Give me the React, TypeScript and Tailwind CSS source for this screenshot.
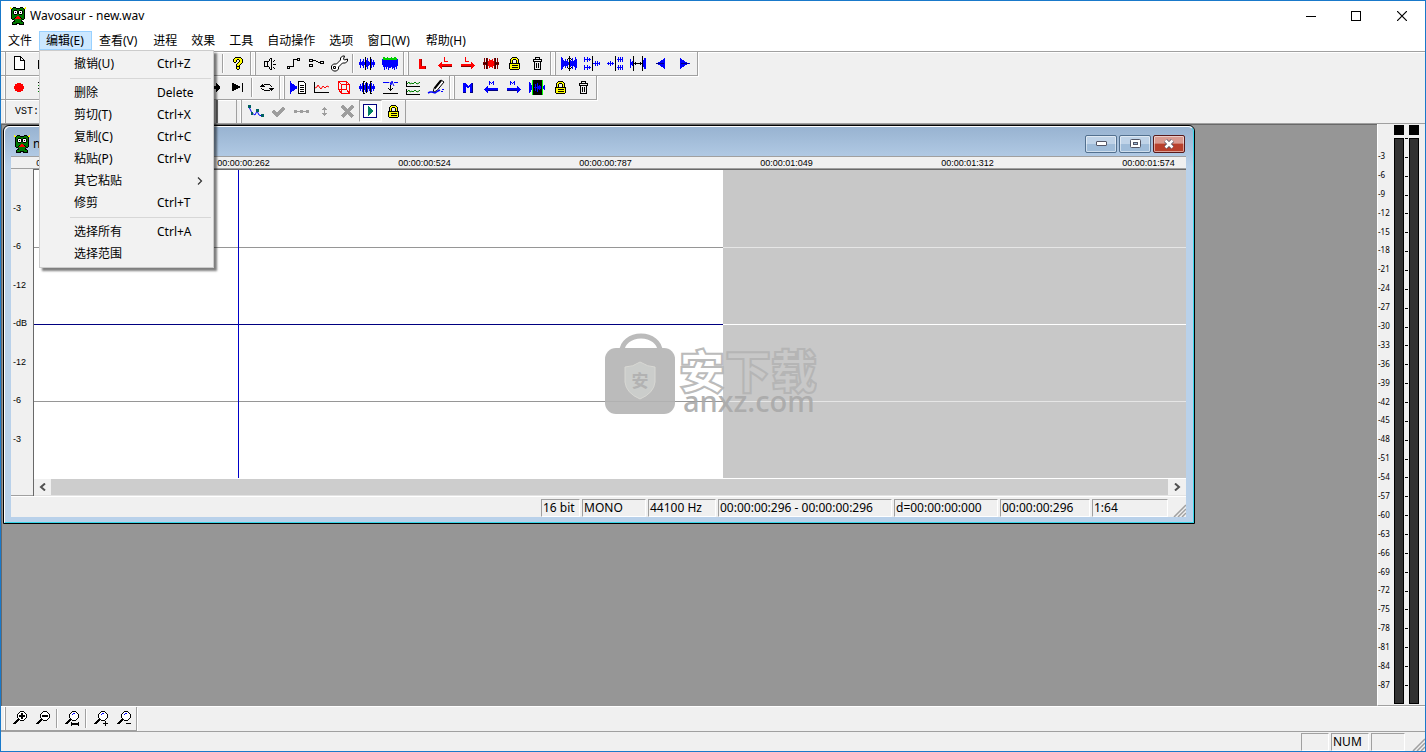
import React, { type ReactNode } from "react";

/* ---------- drawing helpers ---------- */

/** Vertical one-pixel bars centred on cy; each entry is the half height of a column. */
function wave(x: number, cy: number, halves: number[]): string {
  return halves
    .map((h, i) => (h > 0 ? `M${x + i} ${cy - h + 1}h1v${h * 2 - 1}h-1z` : ""))
    .join("");
}

function Glyph({ children }: { children: ReactNode }) {
  return (
    <svg viewBox="0 0 17 17" className="size-[17px] shrink-0 overflow-visible" shapeRendering="crispEdges" fill="none" aria-hidden="true">
      {children}
    </svg>
  );
}

const BLUE = "#0000ff";
const RED = "#ff0000";

const palette: Record<string, string> = {
  k: "#000000",
  g: "#007800",
  y: "#ffff00",
  w: "#ffffff",
  r: "#ff0000",
};

function Pixels({ rows }: { rows: string[] }) {
  return (
    <svg
      viewBox={`0 0 ${rows[0].length} ${rows.length}`}
      width={rows[0].length}
      height={rows.length}
      shapeRendering="crispEdges"
      aria-hidden="true"
    >
      {rows.flatMap((row, y) =>
        row.split("").map((c, x) =>
          palette[c] ? <rect key={`${x}-${y}`} x={x} y={y} width="1" height="1" fill={palette[c]} /> : null,
        ),
      )}
    </svg>
  );
}

const dino = [
  "y..kkk....kkk..y",
  "yykgggkkkkgggkyy",
  ".kggggggggggggk.",
  ".kggkkkggkkkggk.",
  ".kgkwwwkkwwwkgk.",
  ".kgkwkwkkwkwkgk.",
  ".kgkwwwkkwwwkgk.",
  ".kggkkkggkkkggk.",
  ".kggggggggggggk.",
  ".kgggggrrgggggk.",
  ".kgggkrrrrkgggk.",
  ".kggkrrrrrrkggk.",
  "..kkggggggggkk..",
  "....kggggggk....",
  "...kkggggggkk...",
  "..kggggggggggk..",
  "..kgggkkkkgggk..",
  "..kkkkk..kkkkk..",
];

const questionMark = [
  "..kkkkkk..",
  ".kyyyyyyk.",
  "kyyykkyyyk",
  "kyyk..kyyk",
  "kyyk..kyyk",
  ".kk..kyyyk",
  "....kyyyk.",
  "...kyyyk..",
  "...kyyk...",
  "...kkkk...",
  "...kyyk...",
  "...kyyk...",
  "....kk....",
];

const lock = [
  "...kkkkk...",
  "..kyyyyyk..",
  ".kyykkkyyk.",
  ".kyk...kyk.",
  ".kyk...kyk.",
  ".kyk...kyk.",
  "kkkkkkkkkkk",
  "kyyyyyyyyyk",
  "kyykkkkkkyk",
  "kyyyyyyyyyk",
  "kyykkkkkkyk",
  "kyyyyyyyyyk",
  ".kkkkkkkkk.",
];

/* ---------- icons ---------- */

const icons = {
  newFile: (
    <Glyph>
      <path d="M3.500 1.500h6l4 4v9h-10zM9.500 1.500v4h4" stroke="#000" fill="#fff" />
    </Glyph>
  ),
  open: (
    <Glyph>
      <path d="M4.500 13.500v-8h3l1 1h6v7z" stroke="#000" fill="#ffff80" />
    </Glyph>
  ),
  question: <Pixels rows={questionMark} />,
  speaker: (
    <Glyph>
      <path d="M3.500 6.500h3v5h-3zM7 6.500h1M7 11.500h1M8 4.500h1M8 13.500h1M8.500 4v2M8.500 12v2M10.500 3v12M9 3.500h1M9 14.500h1" stroke="#000" />
      <path d="M12 6.500h1M13 5.500h1M12 9.500h3M12 12.500h1M13 13.500h1" stroke="#000" />
    </Glyph>
  ),
  nodesStep: (
    <Glyph>
      <path d="M3.500 11.500h2v2h-2zM13.500 3.500h2v2h-2zM6 11.500h3.500v-7h4" stroke="#000" />
    </Glyph>
  ),
  nodesSplit: (
    <Glyph>
      <path d="M2.500 4.500h3v2h-3zM2.500 9.500h3v2h-3zM13.500 6.500h3v2h-3zM6 5.500h3M9 6.500h2M11 7.500h2" stroke="#000" />
    </Glyph>
  ),
  wrench: (
    <Glyph>
      <path
        d="M1.500 11l2-2h3l4-4v-2l2-2h2l-1 3 1 1 3-1v2l-2 2h-3l-4 4v2l-2 2h-3l-2-2zM3.500 11.500h2v2h-2z"
        stroke="#000"
        fill="#fff"
        shapeRendering="auto"
      />
    </Glyph>
  ),
  waveSelect: (
    <Glyph>
      <path d={wave(0, 8, [2, 5, 2, 3, 5, 2, 0, 4, 6, 3, 2, 0, 5, 2, 4, 2])} fill={BLUE} />
      <path d="M6.500 2v13M11.500 2v13" stroke="#000" />
    </Glyph>
  ),
  waveFull: (
    <Glyph>
      <path d="M0 4h16v7h-1v3h-1v-2h-1v3h-1v-2h-1v1h-1v-2h-1v1h-2v2h-1v-3h-1v2h-1v-2h-1v3h-1v-3h-1v-2h-1z" fill={BLUE} />
      <path d="M1 2h2v1h2v-1h1v1h3v-1h1v1h2v-1h2v1h1v2h-14z" fill="#00d000" />
    </Glyph>
  ),
  redL: (
    <Glyph>
      <path d="M5 4h3v7h4v3h-7z" fill={RED} />
      <path d="M7.500 4v7M11.500 11v3" stroke="#a00000" />
    </Glyph>
  ),
  redPrev: (
    <Glyph>
      <path d="M7.500 2v4.500h3" stroke={RED} />
      <path d="M1 10.500l4-3.500v2h10v2h-10v3z" fill={RED} />
      <path d="M5 11.500h10" stroke="#800000" />
    </Glyph>
  ),
  redNext: (
    <Glyph>
      <path d="M5.500 2v4.500h3" stroke={RED} />
      <path d="M15 10.500l-4-3.500v2h-10v2h10v3z" fill={RED} />
      <path d="M1 11.500h10" stroke="#800000" />
    </Glyph>
  ),
  redWave: (
    <Glyph>
      <path d={wave(0, 8, [2, 6, 2, 4, 6, 2, 2, 2, 2, 2, 2, 6, 4, 2, 6, 2])} fill="#800000" />
      <path d={wave(5, 8, [3, 5, 4, 4, 5, 3])} fill={RED} />
      <path d="M3.500 3v11M12.500 3v11M0 8.500h4M12 8.500h4" stroke="#400000" />
    </Glyph>
  ),
  lock: <Pixels rows={lock} />,
  trash: (
    <Glyph>
      <path d="M4 4.500h9M6.500 4v-1.500h4v2M5.500 6v8.500h6v-8.500M4 6.500h9M4.500 4v3M12.500 4v3" stroke="#000" />
      <path d="M7.500 8v5M9.500 8v5" stroke="#000" />
    </Glyph>
  ),
  waveVertical: (
    <Glyph>
      <path d={wave(0, 8, [7, 6, 4, 3, 5, 3, 4, 2, 2, 4, 3, 6, 3, 4, 7, 5])} fill={BLUE} />
      <path d="M8.500 1v15M7 3.500h3M6 4.500h1M10 4.500h1M7 13.500h3M6 12.500h1M10 12.500h1" stroke="#000" />
    </Glyph>
  ),
  splitLeft: (
    <Glyph>
      <path d={wave(0, 4, [3, 1, 1, 3, 1, 2, 1]) + wave(0, 12, [3, 1, 1, 3, 1, 2, 1]) + wave(9, 8, [1, 1, 3, 1, 3, 1, 2])} fill={BLUE} />
      <path d="M8.500 1v15" stroke="#000" />
    </Glyph>
  ),
  splitRight: (
    <Glyph>
      <path d={wave(10, 4, [1, 3, 1, 3, 1, 3]) + wave(10, 12, [1, 3, 1, 3, 1, 3]) + wave(0, 8, [1, 2, 1, 3, 1, 2, 1])} fill={BLUE} />
      <path d="M8.500 1v15" stroke="#000" />
    </Glyph>
  ),
  waveGap: (
    <Glyph>
      <path d={wave(0, 8, [5, 2, 3]) + wave(13, 8, [4, 6, 6])} fill={BLUE} />
      <path d="M3.500 1v15M12.500 1v15M4 8.500h8M5.500 7v3M10.500 7v3" stroke="#000" />
    </Glyph>
  ),
  fadeIn: (
    <Glyph>
      <path d={wave(3, 8, [1, 1, 2, 2, 3, 4, 4, 5, 6])} fill={BLUE} />
      <path d="M3 8.500h8" stroke="#000080" />
    </Glyph>
  ),
  fadeOut: (
    <Glyph>
      <path d={wave(4, 8, [6, 5, 4, 4, 3, 2, 2, 1, 1, 1])} fill={BLUE} />
      <path d="M5 8.500h8" stroke="#000080" />
    </Glyph>
  ),
  record: (
    <Glyph>
      <path d="M6 4h4v1h2v2h1v3h-1v2h-2v1h-4v-1h-2v-2h-1v-3h1v-2h2z" fill={RED} />
    </Glyph>
  ),
  playlist: (
    <Glyph>
      <path d="M4 3.500h9M4 9.500h9" stroke="#000" />
      <path d="M4 6.500h9M4 12.500h9" stroke="#008000" />
    </Glyph>
  ),
  step: (
    <Glyph>
      <path d="M4 7h6v-3h1v1h1v1h1v1h1v3h-1v1h-1v1h-1v1h-1v-3h-6z" fill="#000" />
    </Glyph>
  ),
  toEnd: (
    <Glyph>
      <path d="M3 4h2v1h2v1h2v1h2v2h-2v1h-2v1h-2v1h-2zM13 4h1v9h-1z" fill="#000" />
    </Glyph>
  ),
  loop: (
    <Glyph>
      <path d="M6 5.500h6M12 6.500h1M13 7.500h1M6 11.500h6M4 10.500h2M3 9.500h1M2 7.500h5M3 6.500h3M4 5.500h1M11 9.500h5M12 10.500h3M13 11.500h1" stroke="#000" />
    </Glyph>
  ),
  waveToText: (
    <Glyph>
      <path d={wave(1, 8, [5, 4, 4, 3, 2, 2])} fill={BLUE} />
      <path d="M0.500 2v13" stroke={BLUE} />
      <path d="M8.500 2.500h5l2 2v10h-7z" stroke="#000" fill="#fff" />
      <path d="M10 6.500h4M10 8.500h4M10 10.500h4M10 12.500h4" stroke="#000" />
    </Glyph>
  ),
  lineChart: (
    <Glyph>
      <path d="M1.500 3v11M1 13.500h15" stroke="#000" />
      <path d="M2 9l2-1 1-2 2 3 1 1 2-3 2 2 2-2 2 1" stroke={RED} shapeRendering="auto" />
    </Glyph>
  ),
  cube: (
    <Glyph>
      <path d="M5.500 5.500h8v9h-8zM2.500 2.500h8v8h-8zM2.500 2.500l3 3M10.500 2.500l3 3M2.500 10.500l3 4M10.500 10.500l3 4" stroke={RED} />
    </Glyph>
  ),
  waveBrackets: (
    <Glyph>
      <path d={wave(0, 8, [2, 4, 2, 5, 0, 3, 5, 0, 5, 2, 4, 0, 5, 2, 4, 2])} fill={BLUE} />
      <path d="M4.500 2v13M4 2.500h2M7.500 3v11M11.500 2v13M11 2.500h2M4 14.500h2M11 14.500h2" stroke="#000" />
    </Glyph>
  ),
  normalize: (
    <Glyph>
      <path d="M1 3.500h6M12 3.500h4" stroke={BLUE} />
      <path d="M8 3l1 3 1-4 1 3 1 2" stroke={BLUE} shapeRendering="auto" />
      <path d="M8.500 6v6M6 9.500h1M10 9.500h1M7 10.500h3M1 14.500h15" stroke="#000" />
    </Glyph>
  ),
  multiTrack: (
    <Glyph>
      <path d="M1.500 2v6M1 7.500h14M1.500 10v6M1 15.500h14" stroke="#000" />
      <path d="M2 5l2-2 1 2 2-1 1 1 2-2 2 2 2-1 1-1M2 13l2-2 1 2 2-1 1 1 2-2 2 2 2-1 1-1" stroke="#008000" shapeRendering="auto" />
    </Glyph>
  ),
  pen: (
    <Glyph>
      <path d="M6 9.500l7-8.500 3 2-7 8.500-4 2z" stroke="#000" fill="#fff" shapeRendering="auto" />
      <path d="M6.500 9.500l6.500-8" stroke="#000" strokeWidth="2" shapeRendering="auto" />
      <path d="M0 14l2-1h2l3 1 3-2 2-1" stroke={BLUE} strokeWidth="1.500" shapeRendering="auto" />
      <path d="M14 10h2v1h-2zM13 12h2v1h-2z" fill={BLUE} />
    </Glyph>
  ),
  marker: (
    <Glyph>
      <path d="M3 4h3v1h1v1h1v1h1v-1h1v-1h1v-1h2v9h-3v-5h-1v1h-2v-1h-1v5h-3z" fill={BLUE} />
      <path d="M12.500 4v9M3 13.500h3M10 13.500h3" stroke="#000080" />
    </Glyph>
  ),
  markerPrev: (
    <Glyph>
      <path d="M6.500 6v-4M10.500 6v-4M7 3.500h1M8 4.500h1M9 3.500h1" stroke={BLUE} />
      <path d="M1 10.500l4-3.500v2h10v2h-10v3z" fill={BLUE} />
      <path d="M5 11.500h10" stroke="#000080" />
    </Glyph>
  ),
  markerNext: (
    <Glyph>
      <path d="M4.500 6v-4M8.500 6v-4M5 3.500h1M6 4.500h1M7 3.500h1" stroke={BLUE} />
      <path d="M15 10.500l-4-3.500v2h-10v2h10v3z" fill={BLUE} />
      <path d="M1 11.500h10" stroke="#000080" />
    </Glyph>
  ),
  waveRegion: (
    <Glyph>
      <path d={wave(0, 8, [6, 5, 3]) + wave(14, 8, [2, 3])} fill={BLUE} />
      <path d="M4 1h9v15h-9z" fill="#000" />
      <path d="M3.500 1v15M13.500 1v15" stroke="#00ff00" />
      <path d={wave(5, 8, [1, 4, 1, 5, 2, 3, 2])} fill={BLUE} />
    </Glyph>
  ),
  envelope: (
    <Glyph>
      <path d="M2 4l3 6 3 2 2-4 2 4 3 1" stroke={BLUE} shapeRendering="auto" />
      <path d="M1 2h3v3h-3zM4 9h2v3h-2zM9 6h3v3h-3zM14 11h3v3h-3z" fill="#006060" />
    </Glyph>
  ),
  check: (
    <Glyph>
      <path d="M3 8l4 4 7-7" stroke="#9d9d9d" strokeWidth="3" />
    </Glyph>
  ),
  dots: (
    <Glyph>
      <path d="M1 7h3v3h-3zM7 7h3v3h-3zM13 7h3v3h-3zM4 8h9v1h-9z" fill="#9d9d9d" />
    </Glyph>
  ),
  upDown: (
    <Glyph>
      <path d="M8.500 4v9M6 6.500h5M7 5.500h3M6 10.500h5M7 11.500h3" stroke="#9d9d9d" />
    </Glyph>
  ),
  cross: (
    <Glyph>
      <path d="M3 3l11 11M14 3l-11 11" stroke="#9d9d9d" strokeWidth="3" />
    </Glyph>
  ),
  playBox: (
    <Glyph>
      <path d="M1.500 1.500h13v13h-13z" stroke="#000080" fill="#fff" />
      <path d="M6 3h1v1h1v1h1v1h1v1h1v2h-1v1h-1v1h-1v1h-1v1h-1z" fill="#008060" />
    </Glyph>
  ),
};

function Magnifier({ children, glint }: { children: ReactNode; glint?: boolean }) {
  return (
    <Glyph>
      <path d="M9 2h4v1h1v1h1v4h-1v1h-1v1h-4v-1h-1v-1h-1v-4h1v-1h1z" fill="#fff" />
      <path
        d="M9 1.500h4M8 2.500h1M13 2.500h1M7 3.500h1M14 3.500h1M6.500 4v4M15.500 4v4M7 8.500h1M14 8.500h1M8 9.500h1M13 9.500h1M9 10.500h4"
        stroke="#000"
      />
      <path d="M6 9h2v2h-1v1h-1v1h-1v1h-3v-1h1v-1h1v-1h1v-1h1z" fill="#000" />
      {glint && <path d="M9 4.500h1M10 3.500h2" stroke={BLUE} />}
      {children}
    </Glyph>
  );
}

/* ---------- toolbars ---------- */

type Tool = [label: string, icon: ReactNode] | null;

function ToolButton({ label, children, pressed }: { label: string; children?: ReactNode; pressed?: boolean }) {
  return (
    <button
      type="button"
      aria-label={label}
      className={
        pressed
          ? "flex h-[22px] w-[23px] shrink-0 items-center justify-center border border-t-[#a0a0a0] border-r-white border-b-white border-l-[#a0a0a0] bg-[#f7f7f7]"
          : "flex h-[22px] w-[23px] shrink-0 items-center justify-center"
      }
    >
      {children}
    </button>
  );
}

function Separator() {
  return (
    <div className="flex w-1.5 shrink-0 justify-center py-0.5">
      <div className="w-0.5 border-r border-l border-r-white border-l-[#a0a0a0]" />
    </div>
  );
}

function Group({ children }: { children: ReactNode }) {
  return (
    <div className="flex h-6 shrink-0 border-r border-b border-[#a0a0a0] pr-px pl-[3px] shadow-[1px_1px_0_#fff]">
      <div className="mr-0.5 w-0.5 border-r border-l border-r-[#a0a0a0] border-l-white" />
      {children}
    </div>
  );
}

function Tools({ items }: { items: Tool[] }) {
  return (
    <>
      {items.map((t, i) => (t ? <ToolButton key={i} label={t[0]}>{t[1]}</ToolButton> : <Separator key={i} />))}
    </>
  );
}

const channelTools: Tool[] = [
  ["Speaker", icons.speaker],
  ["Step", icons.nodesStep],
  ["Routing", icons.nodesSplit],
  ["Settings", icons.wrench],
  null,
  ["Selection", icons.waveSelect],
  ["Full view", icons.waveFull],
];
const loopTools: Tool[] = [
  ["Loop", icons.redL],
  ["Previous loop", icons.redPrev],
  ["Next loop", icons.redNext],
  ["Loop region", icons.redWave],
  ["Lock loops", icons.lock],
  ["Delete loops", icons.trash],
];
const zoomTools: Tool[] = [
  ["Vertical zoom", icons.waveVertical],
  ["Split left", icons.splitLeft],
  ["Split right", icons.splitRight],
  ["Gap", icons.waveGap],
  ["Fade in", icons.fadeIn],
  ["Fade out", icons.fadeOut],
];
const analysisTools: Tool[] = [
  ["Export text", icons.waveToText],
  ["Spectrum", icons.lineChart],
  ["3D spectrum", icons.cube],
  ["Slices", icons.waveBrackets],
  ["Normalize", icons.normalize],
  ["Tracks", icons.multiTrack],
  ["Draw", icons.pen],
];
const markerTools: Tool[] = [
  ["Marker", icons.marker],
  ["Previous marker", icons.markerPrev],
  ["Next marker", icons.markerNext],
  ["Marker region", icons.waveRegion],
  ["Lock markers", icons.lock],
  ["Delete markers", icons.trash],
];
const envelopeTools: Tool[] = [
  ["Envelope", icons.envelope],
  ["Apply", icons.check],
  ["Flatten", icons.dots],
  ["Scale", icons.upDown],
  ["Clear", icons.cross],
];

function Toolbars() {
  return (
    <div className="border-t border-[#a0a0a0]">
      <div className="flex shadow-[inset_0_1px_0_#fff]">
        <Group>
          <div className="flex w-[212px]">
            <Tools items={[["New", icons.newFile], ["Open", icons.open]]} />
          </div>
          <Separator />
          <Tools items={[["Help", icons.question]]} />
        </Group>
        <Group><Tools items={channelTools} /></Group>
        <Group><Tools items={loopTools} /></Group>
        <Group><Tools items={zoomTools} /></Group>
      </div>
      <div className="flex">
        <Group>
          <div className="flex w-[195px]">
            <Tools items={[["Record", icons.record], ["Playlist", icons.playlist]]} />
          </div>
          <Tools items={[["Play", icons.step], ["To end", icons.toEnd], null, ["Loop playback", icons.loop]]} />
        </Group>
        <Group><Tools items={analysisTools} /></Group>
        <Group><Tools items={markerTools} /></Group>
      </div>
      <div className="flex border-b border-[#a0a0a0]">
        <div className="flex h-[23px] w-[236px] border-r border-[#a0a0a0] pl-[3px]">
          <div className="mr-[9px] w-0.5 border-r border-l border-r-[#a0a0a0] border-l-white" />
          <div className="flex flex-1 items-center font-['Liberation_Mono',monospace] text-[10px]">VST:</div>
          <button type="button" aria-label="VST rack" className="mr-[18px] w-14 border-r-2 border-[#696969] bg-[#c0c0c0]" />
        </div>
        <div className="flex h-[23px] border-r border-[#a0a0a0] pl-[3px]">
          <div className="mr-0.5 w-0.5 border-r border-l border-r-[#a0a0a0] border-l-white" />
          <Tools items={envelopeTools} />
          <ToolButton label="Auto play" pressed>{icons.playBox}</ToolButton>
          <ToolButton label="Lock envelope">{icons.lock}</ToolButton>
        </div>
      </div>
    </div>
  );
}

/* ---------- menu ---------- */

const menus = ["文件", "编辑(E)", "查看(V)", "进程", "效果", "工具", "自动操作", "选项", "窗口(W)", "帮助(H)"];

const editMenu: ([string, string] | null)[] = [
  ["撤销(U)", "Ctrl+Z"],
  null,
  ["删除", "Delete"],
  ["剪切(T)", "Ctrl+X"],
  ["复制(C)", "Ctrl+C"],
  ["粘贴(P)", "Ctrl+V"],
  ["其它粘贴", ">"],
  ["修剪", "Ctrl+T"],
  null,
  ["选择所有", "Ctrl+A"],
  ["选择范围", ""],
];

function EditMenu() {
  return (
    <div
      role="menu"
      className="absolute top-full left-0 z-20 w-[175px] border border-[#cccccc] bg-[#f2f2f2] py-0.5 shadow-[3px_3px_2px_rgba(0,0,0,0.5)]"
    >
      {editMenu.map((item, i) =>
        item ? (
          <button key={i} type="button" role="menuitem" className="flex h-[22px] w-full items-center pl-[34px] text-left">
            <span className="w-[83px]">{item[0]}</span>
            {item[1] === ">" ? (
              <svg viewBox="0 0 6 8" className="ml-10 h-2 w-1.5" fill="none" stroke="#333" aria-hidden="true">
                <path d="M1 0.500l3.500 3.500-3.500 3.500" strokeWidth="1.200" />
              </svg>
            ) : (
              <span>{item[1]}</span>
            )}
          </button>
        ) : (
          <div key={i} className="flex h-[7px] items-center pr-0.5 pl-[30px]">
            <div className="h-px flex-1 bg-[#d7d7d7]" />
          </div>
        ),
      )}
    </div>
  );
}

function MenuBar() {
  return (
    <nav className="flex h-5 items-start bg-white">
      {menus.map((m) =>
        m === "编辑(E)" ? (
          <div key={m} className="relative">
            <button type="button" className="flex h-[19px] items-center border border-[#99d1ff] bg-[#cce8ff] pr-[7px] pl-1.5">{m}</button>
            <EditMenu />
          </div>
        ) : (
          <button key={m} type="button" className={m.includes("(") ? "flex h-[19px] items-center pr-[9px] pl-[7px]" : "flex h-[19px] items-center px-[7px]"}>
            {m}
          </button>
        ),
      )}
    </nav>
  );
}

/* ---------- wave window ---------- */

const times = ["00:00:00:000", "00:00:00:262", "00:00:00:524", "00:00:00:787", "00:00:01:049", "00:00:01:312", "00:00:01:574"];
const levels = ["-3", "-6", "-12", "-dB", "-12", "-6", "-3"];

function Watermark() {
  return (
    <div className="pointer-events-none absolute top-[164px] left-[571px] flex gap-1 opacity-90">
      <svg viewBox="0 0 70 80" className="h-20 w-[70px] overflow-visible" aria-hidden="true">
        <path d="M17 17a19 15 0 0 1 38 0" fill="none" stroke="#b4b4b4" strokeWidth="5" />
        <rect y="14" width="70" height="66" rx="11" fill="#b4b4b4" />
        <path d="M35 28q8 5 15 5v15q-1 11-15 17q-14-6-15-17v-15q8 0 15-5z" fill="#c6c8c6" stroke="#d5d5d0" />
        <text x="35" y="53" textAnchor="middle" fontSize="17" fontWeight="700" fill="#aaa" fontFamily="Noto Sans CJK SC, sans-serif">安</text>
      </svg>
      <div className="pt-3">
        <div className="h-11 font-['Noto_Sans_CJK_SC',sans-serif] text-[46px] leading-[44px] font-black [-webkit-text-stroke:2px_#b4b4b4]">
          <span className="text-white">安</span>
          <span className="text-[#c8c8c8]">下载</span>
        </div>
        <div className="pl-1 font-['Noto_Sans',sans-serif] text-[29px] leading-[22px] font-medium text-[#aaaaaa]">anxz.com</div>
      </div>
    </div>
  );
}

function WaveCanvas() {
  return (
    <div className="relative flex h-[308px]">
      <div className="relative w-[689px] bg-white">
        <div className="absolute inset-x-0 top-[77px] h-px bg-[#969696]" />
        <div className="absolute inset-x-0 top-[154px] h-px bg-[#000080]" />
        <div className="absolute inset-x-0 top-[231px] h-px bg-[#969696]" />
        <div className="absolute inset-y-0 left-[204px] w-px bg-[#0000c8]" />
      </div>
      <div className="relative flex-1 bg-[#c8c8c8]">
        <div className="absolute inset-x-0 top-[77px] h-px bg-[#e6e6e6]" />
        <div className="absolute inset-x-0 top-[154px] h-px bg-white" />
        <div className="absolute inset-x-0 top-[231px] h-px bg-[#e6e6e6]" />
      </div>
      <Watermark />
    </div>
  );
}

function Chevron({ left }: { left?: boolean }) {
  return (
    <svg viewBox="0 0 8 8" className="size-2" fill="none" stroke="#505050" strokeWidth="2" aria-hidden="true">
      <path d={left ? "M6 0.500l-4 3.500 4 3.500" : "M2 0.500l4 3.500-4 3.500"} />
    </svg>
  );
}

function SizeGrip() {
  return (
    <svg viewBox="0 0 13 13" className="size-[13px]" stroke="#a0a0a0" strokeWidth="1.500" aria-hidden="true">
      <path d="M1 13l12-12M5 13l8-8M9 13l4-4" />
    </svg>
  );
}

function Cell({ className, children }: { className: string; children?: ReactNode }) {
  return (
    <div
      className={`flex h-[18px] shrink-0 items-center border border-t-[#a0a0a0] border-r-white border-b-white border-l-[#a0a0a0] pl-px whitespace-nowrap ${className}`}
    >
      {children}
    </div>
  );
}

function WindowButton({ label, className, children }: { label: string; className: string; children: ReactNode }) {
  return (
    <button
      type="button"
      aria-label={label}
      className={`flex h-[18px] w-8 items-center justify-center rounded-xs border shadow-[inset_0_0_0_1px_rgba(255,255,255,0.5)] ${className}`}
    >
      {children}
    </button>
  );
}

function WaveWindow() {
  return (
    <section className="absolute top-0 left-px w-[1192px] rounded-t-md border border-black bg-[#b9d1ea] text-[12px]">
      <div className="rounded-t-md border border-t-white border-r-[#35d5e8] border-b-[#35d5e8] border-l-white bg-linear-to-b from-[#98b3d1] to-[#b9d1ea] to-10% pr-[7px] pb-[5px] pl-1.5">
        <header className="flex h-[29px] items-center gap-[3px] pt-1 pl-[3px]">
          <Pixels rows={dino} />
          <span className="flex-1">new.wav</span>
          <div className="mr-px flex gap-0.5">
            <WindowButton label="Minimize" className="border-[#52708f] bg-linear-to-b from-[#bfd3e8] from-50% to-[#9fbcd9] to-50%">
              <span className="h-[5px] w-[11px] rounded-[1px] border border-[#535666] bg-white" />
            </WindowButton>
            <WindowButton label="Maximize" className="border-[#52708f] bg-linear-to-b from-[#bfd3e8] from-50% to-[#9fbcd9] to-50%">
              <svg viewBox="0 0 11 9" className="h-[9px] w-[11px]" aria-hidden="true">
                <rect x="0.500" y="0.500" width="10" height="8" rx="1" fill="#fff" stroke="#535666" />
                <rect x="3.500" y="3.500" width="4" height="2" fill="#9fbcd9" stroke="#535666" />
              </svg>
            </WindowButton>
            <WindowButton label="Close" className="border-[#5a1a1a] bg-linear-to-b from-[#d99a90] from-45% to-[#b8402c] to-50%">
              <svg viewBox="0 0 12 10" className="h-2.5 w-3" aria-hidden="true">
                <path d="M2.500 1.500l7 7M9.500 1.500l-7 7" stroke="#535666" strokeWidth="4" />
                <path d="M2.500 1.500l7 7M9.500 1.500l-7 7" stroke="#fff" strokeWidth="2.500" />
              </svg>
            </WindowButton>
          </div>
        </header>
        <div className="border-t border-[#a0a0a0] bg-[#f0f0f0]">
          <div className="flex h-3 justify-between border-b border-[#a0a0a0] pr-2.5 pl-6 font-['Liberation_Sans',sans-serif] text-[9px] leading-3">
            {times.map((t) => (
              <span key={t} className="w-[55px] text-center whitespace-nowrap">{t}</span>
            ))}
          </div>
          <div className="flex">
            <div className="flex w-[22px] flex-col border-b border-[#a0a0a0] pt-5 font-['Liberation_Sans',sans-serif] text-[9px]">
              {levels.map((l, i) => (
                <span key={i} className="flex h-[38px] items-center pl-0.5 odd:h-[39px]">{l}</span>
              ))}
            </div>
            <div className="flex-1 border-t border-l border-[#696969]">
              <WaveCanvas />
              <div className="flex h-[18px] border-y border-white border-b-[#e3e3e3]">
                <button type="button" aria-label="Scroll left" className="flex w-[17px] items-center justify-center"><Chevron left /></button>
                <div className="flex-1 bg-[#cdcdcd]" />
                <button type="button" aria-label="Scroll right" className="flex w-[18px] items-center justify-center"><Chevron /></button>
              </div>
            </div>
          </div>
          <footer className="flex h-[21px] items-end justify-end gap-0.5 border-t border-white">
            <Cell className="w-[39px]">16 bit</Cell>
            <Cell className="w-16">MONO</Cell>
            <Cell className="w-[68px]">44100 Hz</Cell>
            <Cell className="w-[174px]">00:00:00:296 - 00:00:00:296</Cell>
            <Cell className="w-[104px]">d=00:00:00:000</Cell>
            <Cell className="w-[90px]">00:00:00:296</Cell>
            <Cell className="w-[76px]">1:64</Cell>
            <div className="flex w-4 justify-end"><SizeGrip /></div>
          </footer>
        </div>
      </div>
    </section>
  );
}

/* ---------- level meter ---------- */

const meterLabels = Array.from({ length: 29 }, (_, i) => -3 * (i + 1));

function MeterBar() {
  return (
    <div className="flex w-2.5 flex-col gap-[3px]">
      <div className="h-2.5 bg-black" />
      <div className="flex-1 border border-black bg-[#323232]" />
    </div>
  );
}

function Meter() {
  return (
    <aside className="flex w-12 shrink-0 border-b border-l border-b-[#a0a0a0] border-l-white bg-[#f0f0f0] pb-px">
      <div className="flex w-4 flex-col justify-between pt-[26px] pb-[13px] font-['Noto_Sans',sans-serif] text-[8px] leading-[12px]">
        {meterLabels.map((l) => (
          <span key={l}>{l}</span>
        ))}
      </div>
      <div className="flex pt-px">
        <MeterBar />
        <div className="flex w-[5px] flex-col items-center justify-between pt-[13px] pb-[18px]">
          {[0, ...meterLabels].map((l) => (
            <div key={l} className="h-px w-[3px] bg-black" />
          ))}
        </div>
        <MeterBar />
      </div>
    </aside>
  );
}

/* ---------- page ---------- */

export default function App() {
  return (
    <div className="flex min-h-screen flex-col border border-[#1979ca] bg-[#f0f0f0] font-['Noto_Sans','Noto_Sans_CJK_SC',sans-serif] text-[12px] text-black">
      <header className="flex h-[30px] items-center gap-1 bg-white pl-[9px]">
        <Pixels rows={dino} />
        <h1 className="flex-1">Wavosaur - new.wav</h1>
        <div className="flex">
          <button type="button" aria-label="Minimize" className="flex w-[45px] justify-center">
            <svg viewBox="0 0 10 10" className="size-2.5" shapeRendering="crispEdges" stroke="#000" aria-hidden="true"><path d="M0 5.500h10" /></svg>
          </button>
          <button type="button" aria-label="Maximize" className="flex w-[46px] justify-center">
            <svg viewBox="0 0 10 10" className="size-2.5" shapeRendering="crispEdges" fill="none" stroke="#000" aria-hidden="true"><path d="M0.500 0.500h9v9h-9z" /></svg>
          </button>
          <button type="button" aria-label="Close" className="flex w-[46px] justify-center">
            <svg viewBox="0 0 10 10" className="size-2.5" stroke="#000" strokeWidth="1.200" aria-hidden="true"><path d="M0 0l10 10M10 0l-10 10" /></svg>
          </button>
        </div>
      </header>
      <MenuBar />
      <Toolbars />
      <div className="flex flex-1">
        <main className="relative flex-1 overflow-hidden border-t border-l border-[#696969] bg-[#969696]">
          <WaveWindow />
        </main>
        <Meter />
      </div>
      <div className="flex border-t border-white">
        <Group>
          <Tools
            items={[
              ["Zoom in", <Magnifier><path d="M8 6h6M11 3v6" stroke="#000" strokeWidth="2" /></Magnifier>],
              ["Zoom out", <Magnifier><path d="M8 6h6" stroke="#000" strokeWidth="2" /></Magnifier>],
              null,
              ["Zoom selection", <Magnifier glint><path d="M8.500 12v4M15.500 12v4M9 14h6" stroke="#000" strokeWidth="1.500" /></Magnifier>],
              null,
              ["Vertical zoom in", <Magnifier glint><path d="M11 13.500h5M13.500 11v5" stroke="#000" /></Magnifier>],
              ["Vertical zoom out", <Magnifier glint><path d="M11 13.500h5" stroke="#000" /></Magnifier>],
            ]}
          />
        </Group>
      </div>
      <footer className="flex h-5 items-center justify-end gap-0.5 border-t border-[#a0a0a0]">
        <Cell className="w-7" />
        <Cell className="w-[38px]">NUM</Cell>
        <Cell className="w-[34px]" />
        <div className="flex w-[18px] justify-end self-end"><SizeGrip /></div>
      </footer>
    </div>
  );
}
